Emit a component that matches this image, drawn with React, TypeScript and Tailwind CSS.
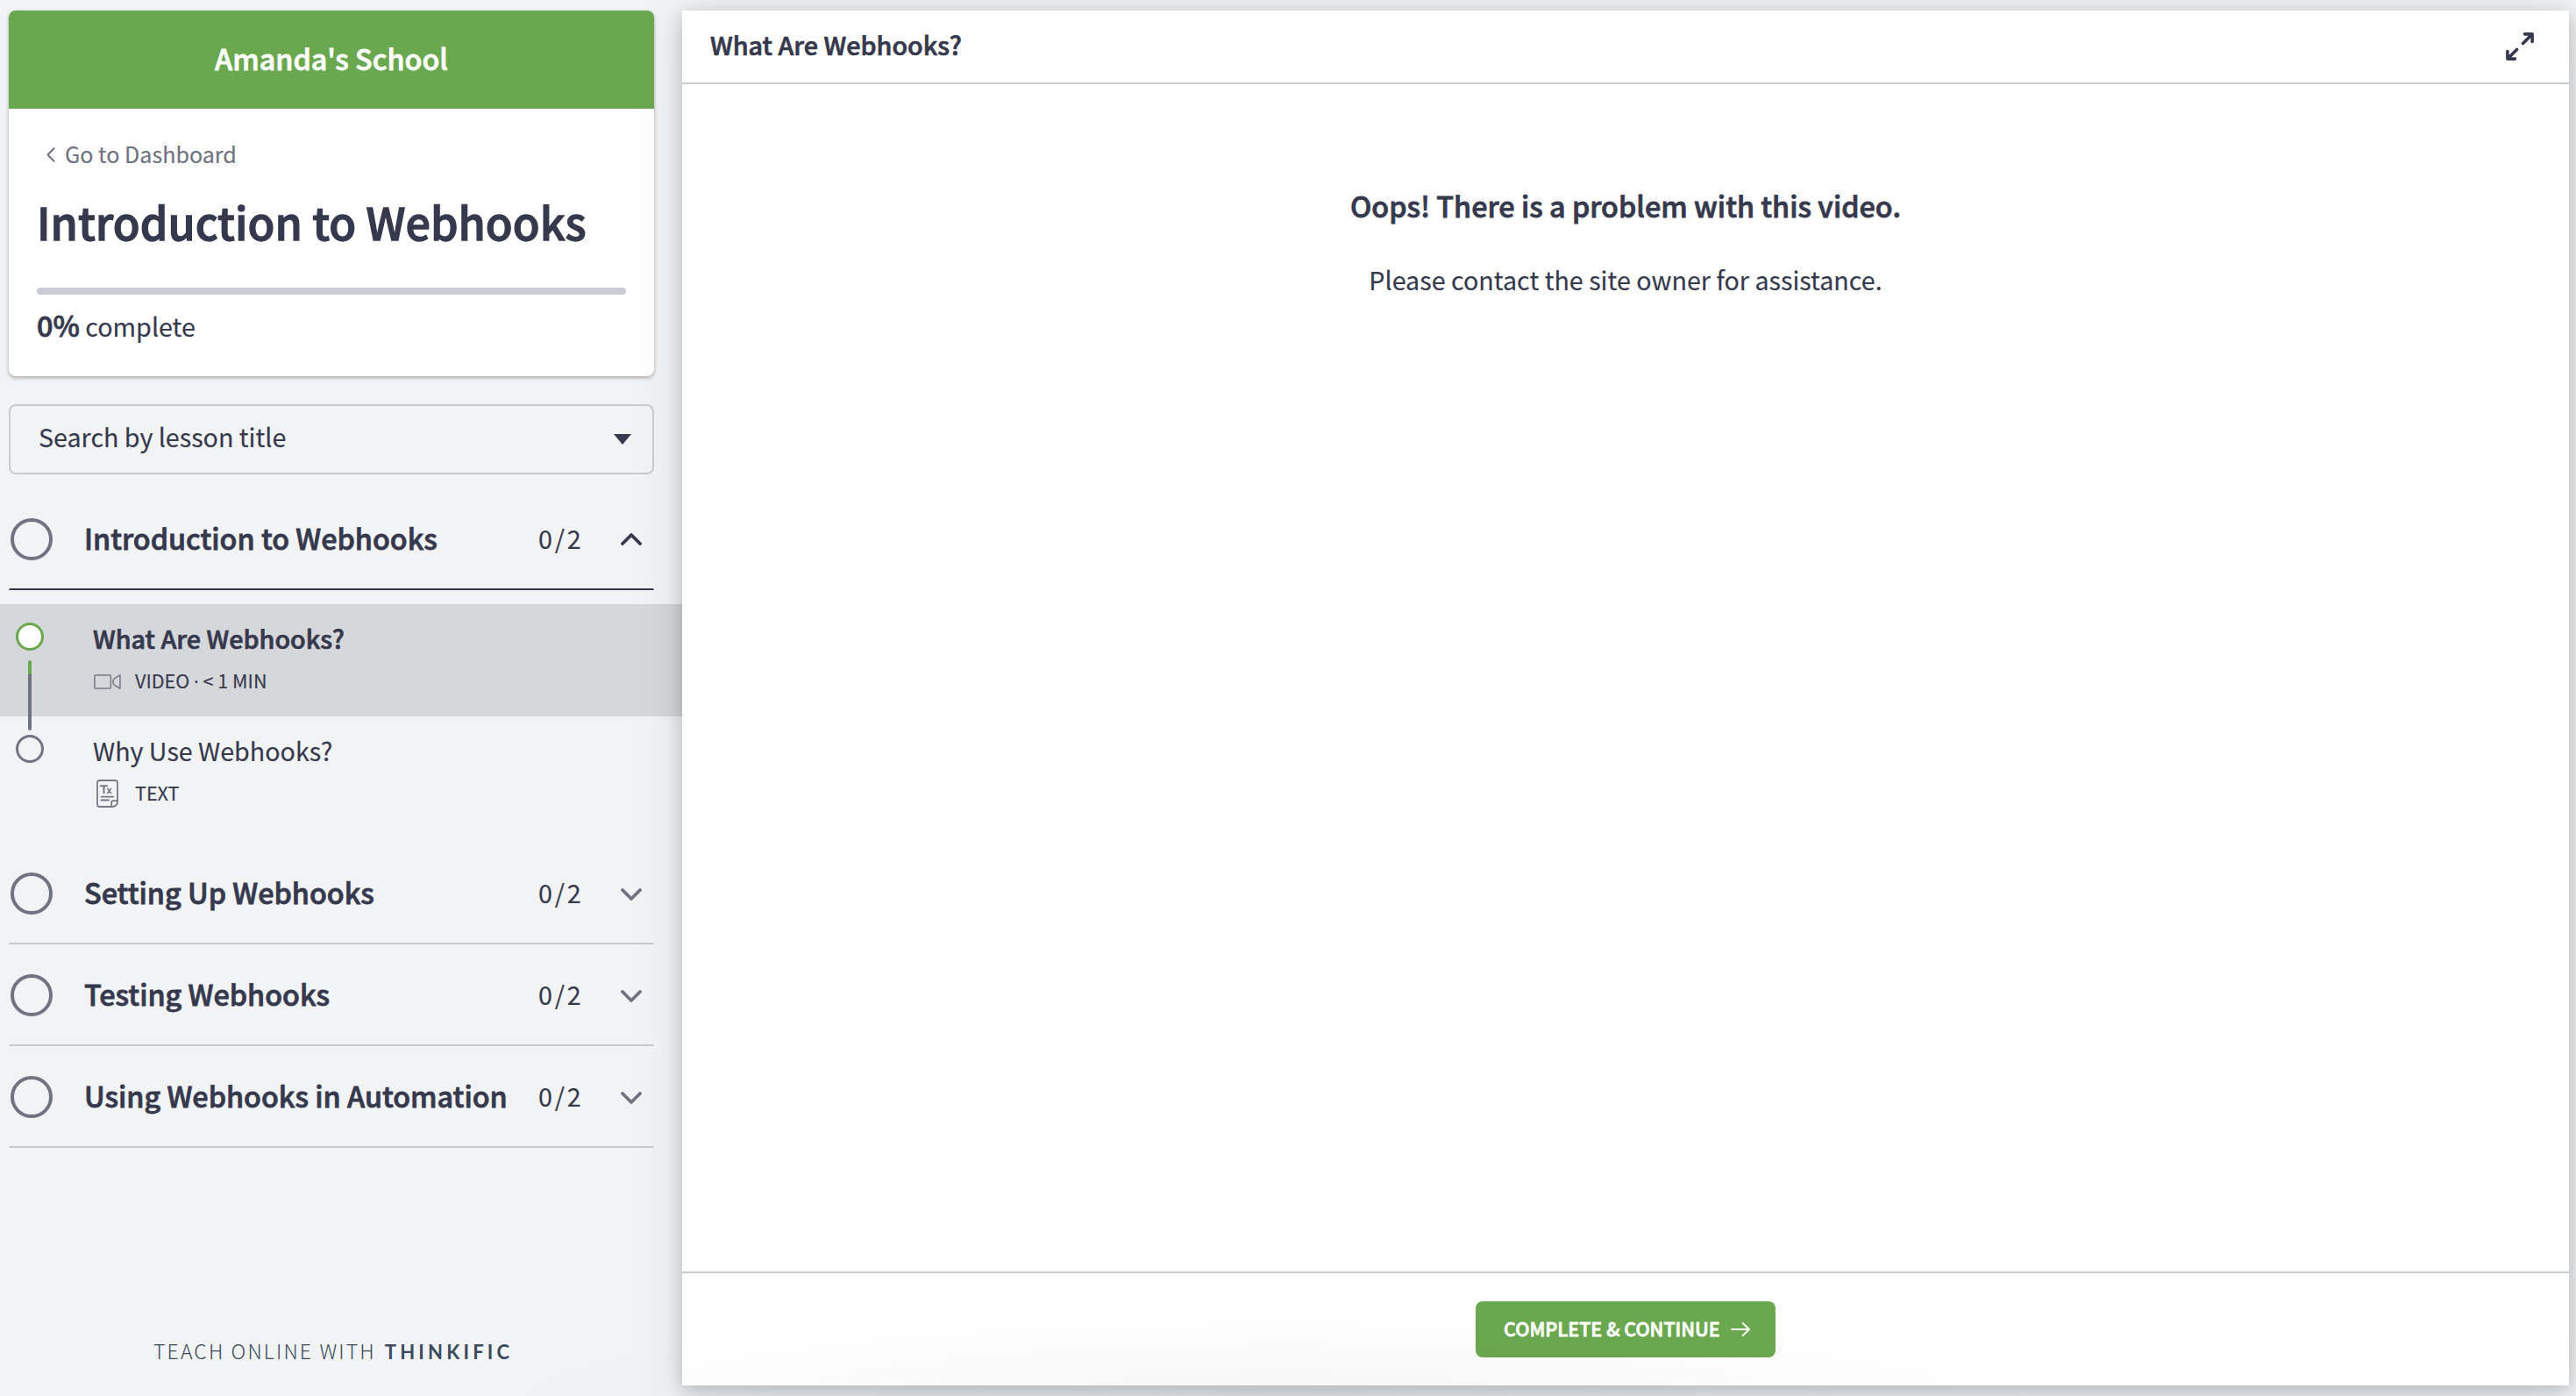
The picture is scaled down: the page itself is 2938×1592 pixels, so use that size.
import type { ReactNode } from "react";

function SectionHeader({ title, open = false }: { title: string; open?: boolean }) {
  return (
    <div
      className={
        "mx-2.5 flex h-[116px] items-center border-x border-b-2 border-x-transparent pt-0.5 " +
        (open ? "border-b-[#36394d]" : "border-b-[#c9cbd1]")
      }
    >
      <span className="ml-px size-12 shrink-0 rounded-full border-4 border-[#707382]" />
      <h2 className="ml-9 w-[518px] pb-1 text-[32.35px] leading-10 font-medium whitespace-nowrap [-webkit-text-stroke:0.025em]">
        {title}
      </h2>
      <span className="w-[94px] pb-[3px] text-[28.75px] leading-10 tracking-[2.8px]">0/2</span>
      {open ? (
        <svg className="h-3.5 w-6 text-[#36394d]" viewBox="0 0 24 14" fill="none" stroke="currentColor" strokeWidth="3.8" strokeLinecap="round" strokeLinejoin="round">
          <path d="M2 12 12 2l10 10" />
        </svg>
      ) : (
        <svg className="mt-0.5 h-3.5 w-6 text-[#707382]" viewBox="0 0 24 14" fill="none" stroke="currentColor" strokeWidth="3.8" strokeLinecap="round" strokeLinejoin="round">
          <path d="M2 2l10 10L22 2" />
        </svg>
      )}
    </div>
  );
}

function Lesson({ title, active = false, icon, meta }: { title: string; active?: boolean; icon: ReactNode; meta: ReactNode }) {
  return (
    <div className={"relative flex h-32 pl-[18px] " + (active ? "bg-[#d6d7db]" : "")}>
      <span
        className={
          "mt-[21px] size-8 shrink-0 rounded-full border-[3px] " +
          (active ? "border-[#6aa84f] bg-white" : "border-[#707382]")
        }
      />
      {active && (
        <span className="absolute top-16 left-8 z-10 flex h-20 w-1 flex-col overflow-hidden rounded-full">
          <span className="h-4 bg-[#6aa84f]" />
          <span className="grow bg-[#707382]" />
        </span>
      )}
      <div className="ml-14 pt-[18px]">
        <h3
          className={
            "h-[41px] leading-[41px] " +
            (active ? "text-[28.75px] font-medium [-webkit-text-stroke:0.025em]" : "text-[28.65px]")
          }
        >
          {title}
        </h3>
        <div className="flex h-[55px] items-center">
          <span className="mt-[3px] flex w-12 shrink-0">{icon}</span>
          <span className="mt-px text-[21.55px] leading-8 whitespace-nowrap">{meta}</span>
        </div>
      </div>
    </div>
  );
}

const VideoIcon = () => (
  <svg className="ml-px h-[17px] w-[31px]" viewBox="0 0 31 17" fill="none" stroke="#858793" strokeWidth="1.8" strokeLinejoin="round">
    <rect x="0.9" y="0.9" width="18.4" height="15.2" rx="1" />
    <path d="M30 0.9v15.2l-6.2-3.6q-2-1.2-2-4t2-4z" />
  </svg>
);

const TextIcon = () => (
  <svg className="ml-1 h-8 w-[25px]" viewBox="0 0 25 32" fill="none" stroke="#767986" strokeWidth="1.8" strokeLinecap="round" strokeLinejoin="round">
    <path d="M3.6 1h17.8q2.6 0 2.6 2.6v20.8q0 6.6-6.600 6.600H3.600Q1 31 1 28.400V3.600Q1 1 3.600 1z" />
    <path d="M24 24.200h-4.800q-2 0-2 2V31" />
    <path d="M5.500 19.600h13.800M5.500 23.500h8.500" />
    <path d="M4.800 7.200h7.500M8.500 7.200v8.300" strokeWidth="2" />
    <path d="M12.600 10.300l4 5.200M16.600 10.300l-4 5.200" strokeWidth="1.500" />
  </svg>
);

function Sidebar() {
  return (
    <aside className="flex w-[778px] shrink-0 flex-col pt-3">
      <div className="mx-2.5 h-[417px] w-[736px] overflow-hidden rounded-lg bg-white shadow-[0_2px_4px_rgba(0,0,0,0.3)]">
        <div className="flex h-28 items-center justify-center bg-[#6aa84f] pb-1 text-[32.35px] font-medium text-white [-webkit-text-stroke:0.025em]">
          Amanda's School
        </div>
        <div className="px-8 pt-[31px]">
          <a className="flex h-10 items-center text-[25.1px] leading-10 text-[#707382]">
            <svg className="mt-0.5 mr-[11px] ml-[11px] h-[17px] w-[10px]" viewBox="0 0 10 17" fill="none" stroke="currentColor" strokeWidth="2" strokeLinecap="round" strokeLinejoin="round">
              <path d="M8.500 1.200 1.500 8.500l7 7.300" />
            </svg>
            Go to Dashboard
          </a>
          <h1 className="mt-[25px] h-16 text-[50.3px] leading-[64px] font-medium whitespace-nowrap [-webkit-text-stroke:0.025em]">
            Introduction to Webhooks
          </h1>
          <div className="mt-11 h-2 w-[672px] rounded-full bg-[#c9cbd5]" />
          <p className="mt-3.5 text-[32.35px] leading-10">
            <span className="font-medium [-webkit-text-stroke:0.025em]">0%</span>
            <span className="text-[28.7px]"> complete</span>
          </p>
        </div>
      </div>

      <div className="mx-2.5 mt-8 flex h-20 w-[736px] shrink-0 items-center justify-between rounded-lg border-2 border-[#c9cbd1] pr-6 pl-8">
        <span className="pb-[7px] text-[28.65px] leading-10">Search by lesson title</span>
        <svg className="h-3 w-5" viewBox="0 0 20 12" fill="#36394d">
          <path d="M0 0h20L10 12z" />
        </svg>
      </div>

      <nav className="mt-4 w-full">
        <div className="w-[756px]">
          <SectionHeader title="Introduction to Webhooks" open />
        </div>
        <div className="my-4">
          <Lesson
            active
            title="What Are Webhooks?"
            icon={<VideoIcon />}
            meta={
              <>
                VIDEO <span className="font-['Open_Sans']">·</span> &lt; 1 MIN
              </>
            }
          />
          <Lesson title="Why Use Webhooks?" icon={<TextIcon />} meta="TEXT" />
        </div>
        <div className="w-[756px]">
          <SectionHeader title="Setting Up Webhooks" />
          <SectionHeader title="Testing Webhooks" />
          <SectionHeader title="Using Webhooks in Automation" />
        </div>
      </nav>

      <div className="mt-auto flex items-baseline pb-[34px] pl-[175px] text-[23px] leading-8 text-[#3b4a5c] [-webkit-text-stroke:0]">
        <span className="font-light tracking-[2.15px]">TEACH ONLINE WITH</span>
        <span className="ml-[10px] font-['Lato'] text-[22px] font-bold tracking-[4.2px]">THINKIFIC</span>
      </div>
    </aside>
  );
}

export default function App() {
  return (
    <div className="relative flex h-screen w-full overflow-hidden bg-[#f1f3f5] font-['Noto_Sans_CJK_SC',sans-serif] text-[#36394d] [-webkit-text-stroke:0.01em]">
      <Sidebar />
      <main className="relative z-20 mt-3 mr-2 mb-3 flex grow flex-col bg-white shadow-[0_6px_20px_rgba(0,0,0,0.2),0_4px_56px_rgba(0,0,0,0.1)]">
        <header className="flex h-[84px] shrink-0 items-center justify-between border-b-2 border-[#c9cbd1] pr-10 pl-8">
          <h2 className="pb-[5px] text-[28.75px] font-medium [-webkit-text-stroke:0.025em]">What Are Webhooks?</h2>
          <svg className="size-8" viewBox="0 0 32 32" fill="none" stroke="#36394d" strokeWidth="3.6" strokeLinecap="round" strokeLinejoin="round">
            <path d="M19.500 12.500 30 2M21.500 1.900h8.600v8.600M12.500 19.500 2 30M1.900 21.500v8.600h8.600" />
          </svg>
        </header>
        <section className="flex grow flex-col items-center pt-[114px]">
          <h3 className="h-12 text-[32.35px] leading-[48px] font-medium [-webkit-text-stroke:0.025em]">
            Oops! There is a problem with this video.
          </h3>
          <p className="mt-[37px] h-12 text-[28.7px] leading-[48px]">Please contact the site owner for assistance.</p>
        </section>
        <footer className="flex h-[130px] shrink-0 items-center justify-center border-t-2 border-[#c9cbd1]">
          <button className="flex h-16 w-[342px] items-center justify-between rounded-lg bg-[#6aa84f] pr-[29px] pl-8 text-white">
            <span className="pb-[3px] text-[21.55px] leading-8 font-medium whitespace-nowrap [-webkit-text-stroke:0.035em]">
              COMPLETE &amp; CONTINUE
            </span>
            <svg className="h-4 w-[22px]" viewBox="0 0 22 16" fill="none" stroke="currentColor" strokeWidth="2" strokeLinecap="round" strokeLinejoin="round">
              <path d="M1 8h20M13.800 1 21 8l-7.200 7" />
            </svg>
          </button>
        </footer>
      </main>
      <div className="pointer-events-none absolute bottom-0 left-[540px] z-30 h-24 w-[1858px] bg-[radial-gradient(ellipse_at_bottom,rgba(0,0,0,0.035),transparent_70%)]" />
    </div>
  );
}
